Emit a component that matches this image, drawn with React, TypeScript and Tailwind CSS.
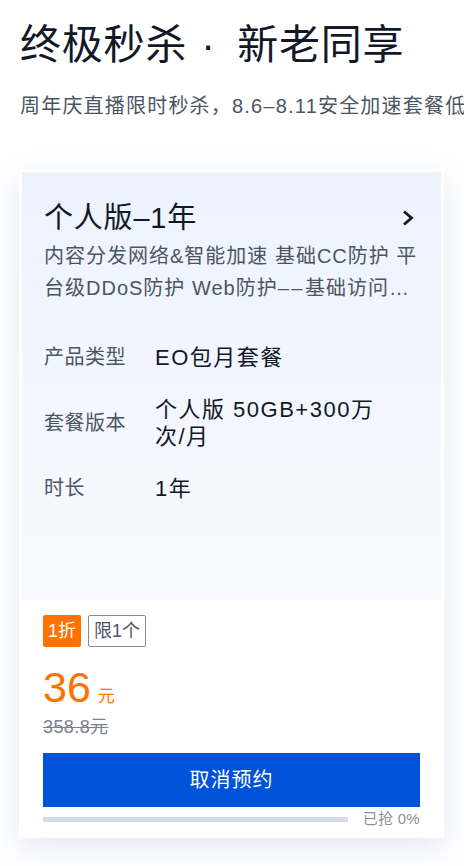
const font = { fontFamily: '"Liberation Sans", "Noto Sans CJK SC", sans-serif' };

function Row({ label, value }: { label: string; value: React.ReactNode }) {
  return (
    <div className="flex items-center">
      <div className="w-[111px] shrink-0 text-[20px] leading-[27px] tracking-[0.5px] text-[#4b5563]">{label}</div>
      <div className="text-[22px] leading-[27px] tracking-[1.5px] text-[#111827]">{value}</div>
    </div>
  );
}

export default function App() {
  return (
    <div className="min-h-[866px] w-[464px] overflow-hidden bg-white" style={font}>
      <div className="pl-5 pt-[17px]">
        <h1 className="whitespace-nowrap text-[41px] leading-[56px] tracking-[0.8px] text-[#111827]">
          终极秒杀<span className="inline-block w-[50px] pl-[14px] text-left">·</span>新老同享
        </h1>
        <p className="mt-[19px] whitespace-nowrap text-[20px] leading-[28px] tracking-[1.2px] text-[#4b5563]">
          周年庆直播限时秒杀，8.6–8.11安全加速套餐低至1折
        </p>
      </div>

      <div className="ml-[19px] mt-[49px] w-[425px] border-[3px] border-white bg-white shadow-[0_10px_30px_rgba(60,100,170,0.14)]">
        {/* 套餐信息 */}
        <div className="h-[428px] bg-gradient-to-b from-[#edf2fd] to-[#f8faff] px-[22px] pt-[28px]">
          <div className="flex items-center justify-between">
            <div className="text-[29px] leading-[36px] tracking-[0.8px] text-[#111827]">个人版–1年</div>
            <svg width="14" height="16" viewBox="0 0 14 16" className="mr-[4px]">
              <path d="M3 1.5 L10.5 8 L3 14.5" fill="none" stroke="#111827" strokeWidth="2.8" />
            </svg>
          </div>
          <p className="mt-[4px] -mr-[6px] line-clamp-2 text-[20px] leading-[32px] tracking-[1px] text-[#4b5563]">
            内容分发网络&amp;智能加速 基础CC防护 平台级DDoS防护 Web防护<span className="tracking-[2.5px]">––</span>基础访问控制 Bot管理
          </p>
          <div className="mt-[40px] flex flex-col gap-[25px]">
            <Row label="产品类型" value="EO包月套餐" />
            <Row
              label="套餐版本"
              value={
                <>
                  个人版 50GB+300万
                  <br />
                  次/月
                </>
              }
            />
            <Row label="时长" value="1年" />
          </div>
        </div>

        {/* 价格与操作 */}
        <div className="px-[21px] pt-[15px] pb-[4px]">
          <div className="flex gap-[7px]">
            <span className="rounded-[2px] bg-[#ff7200] px-[5px] text-[18px] leading-[32px] text-white">1折</span>
            <span className="rounded-[2px] border border-[#8a8a8a] px-[5px] text-[18px] leading-[30px] text-[#4b5563]">
              限1个
            </span>
          </div>
          <div className="mt-[20px] flex items-baseline text-[#ff7200]">
            <span className="text-[43px] leading-[40px]">36</span>
            <span className="ml-[7px] text-[17px] leading-[20px]">元</span>
          </div>
          <div className="mt-[7px] text-[18px] leading-[26px] tracking-[0.4px] text-[#7b8190] line-through">358.8元</div>
          <button className="mt-[13px] h-[54px] w-full bg-[#0052d9] text-[20px] tracking-[1px] text-white">取消预约</button>
          <div className="flex items-center">
            <div className="h-[5px] w-[305px] bg-[#d5dbe8]" />
            <span className="ml-auto text-[15px] leading-[24px] tracking-[0.3px] text-[#8a8f99]">已抢 0%</span>
          </div>
        </div>
      </div>
    </div>
  );
}
